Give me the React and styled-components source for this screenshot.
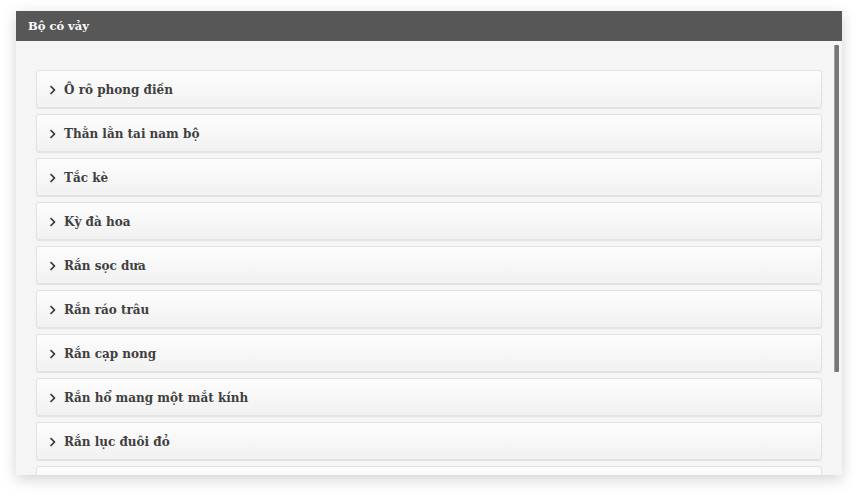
import React from 'react';
import styled, { createGlobalStyle } from 'styled-components';

const GlobalStyle = createGlobalStyle`
  html, body {
    margin: 0;
    padding: 0;
    background: #ffffff;
  }
  body {
    font-family: "DejaVu Serif", "Liberation Serif", serif;
  }
`;

const Page = styled.div`
  padding: 11px 16px 0 16px;
  width: 858px;
  height: 497px;
  box-sizing: border-box;
`;

const Panel = styled.div`
  width: 826px;
  background: #f5f5f5;
  box-shadow: 0 4px 14px rgba(0, 0, 0, 0.18);
  display: flex;
  flex-direction: column;
`;

const Header = styled.div`
  height: 30px;
  background: #575757;
  color: #ffffff;
  font-weight: bold;
  font-size: 11.5px;
  display: flex;
  align-items: center;
  padding-left: 12px;
`;

const Body = styled.div`
  position: relative;
  height: 434px;
  overflow: hidden;
  padding: 29px 20px 6px 20px;
  box-sizing: border-box;
`;

const ScrollThumb = styled.div`
  position: absolute;
  top: 4px;
  right: 3px;
  width: 5px;
  height: 327px;
  background: #777777;
  border-left: 1px solid #a0a0a0;
  box-sizing: border-box;
  border-radius: 1px;
`;

const List = styled.div`
  display: flex;
  flex-direction: column;
  gap: 6px;
`;

const Item = styled.div`
  height: 38px;
  flex-shrink: 0;
  box-sizing: border-box;
  border: 1px solid #e2e2e2;
  border-radius: 3px;
  background: linear-gradient(#fdfdfd, #f1f1f1);
  box-shadow: 0 1px 1px rgba(0, 0, 0, 0.08);
  display: flex;
  align-items: center;
  padding: 2px 0 0 12px;
  gap: 7px;
  color: #3f3f3f;
  font-weight: bold;
  font-size: 12px;
`;

const Chevron = () => (
  <svg width="8" height="10" viewBox="0 0 8 10">
    <path d="M2 1.5 L5.5 5 L2 8.5" fill="none" stroke="#333" strokeWidth="1.7" strokeLinecap="round" strokeLinejoin="round" />
  </svg>
);

const animals = [
  'Ô rô phong điền',
  'Thằn lằn tai nam bộ',
  'Tắc kè',
  'Kỳ đà hoa',
  'Rắn sọc dưa',
  'Rắn ráo trâu',
  'Rắn cạp nong',
  'Rắn hổ mang một mắt kính',
  'Rắn lục đuôi đỏ',
];

export default function App() {
  return (
    <>
      <GlobalStyle />
      <Page>
        <Panel>
          <Header>Bộ có vảy</Header>
          <Body>
            <List>
              {animals.map((name) => (
                <Item key={name}>
                  <Chevron />
                  {name}
                </Item>
              ))}
              <Item />
            </List>
            <ScrollThumb />
          </Body>
        </Panel>
      </Page>
    </>
  );
}
